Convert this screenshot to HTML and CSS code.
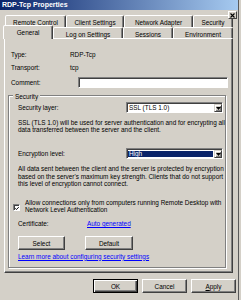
FILE: index.html
```html
<!DOCTYPE html>
<html lang="en">
<head>
    <meta charset="UTF-8">
    <meta name="viewport" content="width=device-width, initial-scale=1.0">
    <title>RDP-Tcp Properties</title>
    <link rel="stylesheet" href="styles.css">
</head>
<body>

    <div class="window">
        <div class="caption">RDP-Tcp Properties</div>
        <div class="close">
            <svg width="5" height="5" viewBox="0 0 5 5"><path d="M0.5 0.5 L4.5 4.5 M4.5 0.5 L0.5 4.5" stroke="#000" stroke-width="1.1"/></svg>
        </div>

        <div class="tab-row back">
            <div class="tab" style="width: 61px;">Remote Control</div>
            <div class="tab" style="width: 58px;">Client Settings</div>
            <div class="tab" style="width: 69px;">Network Adapter</div>
            <div class="tab" style="width: 40px;">Security</div>
        </div>
        <div class="tab-row front">
            <div class="tab active" style="width: 50px;">General</div>
            <div class="tab" style="width: 70px;">Log on Settings</div>
            <div class="tab" style="width: 50px;">Sessions</div>
            <div class="tab" style="width: 60px;">Environment</div>
        </div>

        <div class="panel">
            <div class="info type"><span class="label">Type:</span><span>RDP-Tcp</span></div>
            <div class="info transport"><span class="label">Transport:</span><span>tcp</span></div>
            <div class="info comment"><span class="label wide">Comment:</span><div class="textbox"></div></div>

            <div class="group">
                <div class="legend">Security</div>

                <div class="row layer">
                    <span class="label long">Security layer:</span>
                    <div class="select">
                        <div class="value">SSL (TLS 1.0)</div>
                        <div class="arrow"><svg width="5" height="3" viewBox="0 0 5 3"><path d="M0 0 H5 L2.5 3 Z" fill="#000"/></svg></div>
                    </div>
                </div>

                <p class="note ssl">SSL (TLS 1.0) will be used for server authentication and for encrypting all<br>data transferred between the server and the client.</p>

                <div class="row enc">
                    <span class="label long">Encryption level:</span>
                    <div class="select">
                        <div class="value picked">High</div>
                        <div class="arrow"><svg width="5" height="3" viewBox="0 0 5 3"><path d="M0 0 H5 L2.5 3 Z" fill="#000"/></svg></div>
                    </div>
                </div>

                <p class="note alldata">All data sent between the client and the server is protected by encryption<br>based on the server's maximum key strength. Clients that do not support<br>this level of encryption cannot connect.</p>

                <div class="check-row">
                    <div class="checkbox">
                        <svg width="5" height="5" viewBox="0 0 5 5"><path d="M0.3 2.2 L1.8 3.8 L4.7 0.8" stroke="#000" stroke-width="1.2" fill="none"/></svg>
                    </div>
                    <span>Allow connections only from computers running Remote Desktop with<br>Network Level Authentication</span>
                </div>

                <div class="row cert">
                    <span class="label cert-label">Certificate:</span>
                    <a href="#" class="link">Auto generated</a>
                </div>

                <div class="btn-row">
                    <button class="btn" style="width: 47px;">Select</button>
                    <button class="btn" style="width: 48px;">Default</button>
                </div>

                <div class="link-row"><a href="#" class="link">Learn more about configuring security settings</a></div>
            </div>
        </div>

        <div class="actions">
            <button class="btn default">OK</button>
            <button class="btn">Cancel</button>
            <button class="btn"><u>A</u>pply</button>
        </div>
    </div>

</body>
</html>
```

FILE: styles.css
```css
body {
    margin: 0;
    background-color: #d4d0c8;
    font-family: "Liberation Sans", Arial, sans-serif;
    font-size: 6.4px;
    color: #000;
}
.window {
    position: relative;
    width: 239px;
    height: 300px;
    box-sizing: border-box;
    border-right: 1px solid #5a5a5a;
    overflow: hidden;
}
.caption {
    height: 10px;
    line-height: 10px;
    padding-left: 2px;
    background: linear-gradient(to right, #0a246a, #a6caf0);
    color: #fff;
    font-weight: bold;
    font-size: 7px;
}
/* title bar close box sits over the tab strip corner */
.close {
    position: absolute;
    left: 228px;
    top: 11px;
    width: 9px;
    height: 8px;
    box-sizing: border-box;
    background-color: #d4d0c8;
    border: 1px solid;
    border-color: #fff #404040 #404040 #fff;
    display: flex;
    align-items: center;
    justify-content: center;
    z-index: 2;
}
.close svg {
    display: block;
}
.tab-row {
    display: flex;
}
.tab-row.back {
    margin-top: 5px;
    padding-left: 5px;
    height: 12px;
}
.tab-row.front {
    padding-left: 3px;
    height: 11px;
}
.tab {
    box-sizing: border-box;
    height: 100%;
    border: 1px solid;
    border-bottom: 0;
    border-color: #fff #404040 transparent #fff;
    box-shadow: inset -1px 0 #808080;
    border-radius: 2px 2px 0 0;
    text-align: center;
    white-space: nowrap;
    padding-top: 2px;
    line-height: 9px;
    background-color: #d4d0c8;
}
.tab.active {
    position: relative;
    z-index: 1;
    height: 14px;
    margin-top: -2px;
    padding-top: 2px;
}
.panel {
    margin-left: 4px;
    width: 229px;
    height: 235px;
    box-sizing: border-box;
    border: 1px solid;
    border-color: #fff #404040 #404040 #fff;
    box-shadow: inset -1px -1px #808080;
}
.info {
    display: flex;
    align-items: center;
    padding-left: 6px;
    height: 8px;
    line-height: 8px;
}
.info .label {
    width: 59px;
}
.info .label.wide {
    width: 67px;
}
.type {
    margin-top: 12px;
}
.transport {
    margin-top: 5px;
}
.comment {
    margin-top: 5px;
    height: 11px;
}
.textbox {
    width: 150px;
    height: 11px;
    box-sizing: border-box;
    background-color: #fff;
    border: 1px solid;
    border-color: #808080 #fff #fff #808080;
    box-shadow: inset 1px 1px #404040;
}
.group {
    margin: 7px 0 0 3px;
    width: 218px;
    height: 173px;
    box-sizing: border-box;
    border: 1px solid #808080;
    box-shadow: inset 1px 1px #fff, 1px 1px #fff;
}
.legend {
    display: table;
    margin: -3px 0 0 4px;
    padding: 0 2px;
    line-height: 8px;
    background-color: #d4d0c8;
}
.row {
    display: flex;
    align-items: center;
    padding-left: 9px;
}
.row .label.long {
    width: 108px;
}
.layer {
    margin-top: 1px;
    height: 11px;
}
.select {
    display: flex;
    width: 97px;
    height: 11px;
    box-sizing: border-box;
    background-color: #fff;
    border: 1px solid;
    border-color: #808080 #fff #fff #808080;
    box-shadow: inset 1px 1px #404040;
    padding: 1px 0 0 1px;
}
.select .value {
    flex: 1;
    line-height: 8px;
    padding-left: 1px;
}
.select .value.picked {
    background-color: #0a246a;
    color: #fff;
    margin: 1px 1px 1px 0;
    line-height: 6px;
}
.arrow {
    width: 8px;
    height: 8px;
    box-sizing: border-box;
    background-color: #d4d0c8;
    border: 1px solid;
    border-color: #d4d0c8 #404040 #404040 #d4d0c8;
    box-shadow: inset 1px 1px #fff, inset -1px -1px #808080;
    display: flex;
    align-items: center;
    justify-content: center;
}
.arrow svg {
    display: block;
}
.note {
    margin: 0;
    padding-left: 9px;
    line-height: 7px;
    white-space: nowrap;
}
.ssl {
    margin-top: 5.5px;
}
.enc {
    margin-top: 15.5px;
    height: 11px;
}
.alldata {
    margin-top: 6.25px;
    line-height: 7.5px;
}
.check-row {
    display: flex;
    align-items: flex-start;
    margin-top: 11.25px;
    padding-left: 4px;
    line-height: 7px;
    white-space: nowrap;
}
.checkbox {
    width: 7px;
    height: 7px;
    box-sizing: border-box;
    margin: 5px 5px 0 0;
    background-color: #fff;
    border: 1px solid;
    border-color: #808080 #fff #fff #808080;
    box-shadow: inset 1px 1px #404040;
    display: flex;
    align-items: center;
    justify-content: center;
}
.checkbox svg {
    display: block;
    margin: 1px 0 0 1px;
}
.cert {
    margin-top: 7px;
    height: 8px;
    line-height: 8px;
}
.cert-label {
    width: 69px;
}
.link {
    color: #0000ff;
    text-decoration: underline;
}
.btn-row {
    display: flex;
    gap: 20px;
    margin-top: 8px;
    padding-left: 9px;
}
.btn {
    height: 14px;
    box-sizing: border-box;
    padding: 0;
    font-family: inherit;
    font-size: 6.4px;
    color: #000;
    background-color: #d4d0c8;
    border: 1px solid;
    border-color: #fff #404040 #404040 #fff;
    box-shadow: inset -1px -1px #808080;
}
.btn.default {
    border-color: #000;
    box-shadow: inset 1px 1px #fff, inset -1px -1px #404040, inset -2px -2px #808080;
}
.link-row {
    margin-top: 2.5px;
    padding-left: 9px;
    line-height: 7px;
    white-space: nowrap;
}
.actions {
    display: flex;
    justify-content: flex-end;
    gap: 4px;
    margin-top: 6px;
    padding-right: 2px;
}
.actions .btn {
    width: 45px;
}
```
